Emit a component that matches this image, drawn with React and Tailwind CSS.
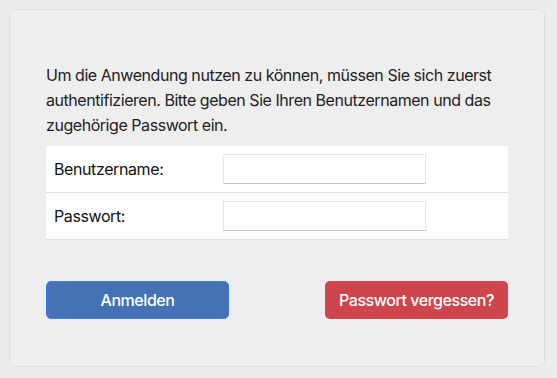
export default function App() {
  const font = { fontFamily: 'Inter, "Noto Sans", sans-serif' };
  return (
    <div className="w-[557px] h-[378px] bg-[#ececec] p-[9px]" style={font}>
      <div className="w-[536px] h-[358px] bg-[#eeeeee] border border-[#dedede] rounded-[6px] pt-[53px] px-[36px]">
        <p className="text-[16px] leading-[25px] text-[#222] tracking-[-0.45px]">
          Um die Anwendung nutzen zu können, müssen Sie sich zuerst authentifizieren. Bitte geben Sie Ihren Benutzernamen und das zugehörige Passwort ein.
        </p>
        <div className="mt-[8px] bg-white border-b border-[#e0e0e0]">
          <div className="flex items-center h-[47px] border-b border-[#e0e0e0]">
            <div className="w-[177px] pl-[8px] text-[16px] text-[#111] tracking-[-0.4px]">Benutzername:</div>
            <input className="w-[203px] h-[30px] bg-white border border-[#e6e6e6] border-b-[#c6c6c6] outline-none" />
          </div>
          <div className="flex items-center h-[46px]">
            <div className="w-[177px] pl-[8px] text-[16px] text-[#111] tracking-[-0.4px]">Passwort:</div>
            <input type="password" className="w-[203px] h-[30px] bg-white border border-[#e6e6e6] border-b-[#c6c6c6] outline-none" />
          </div>
        </div>
        <div className="flex justify-between mt-[41px]">
          <button className="w-[183px] h-[38px] rounded-[5px] bg-[#4472b4] border border-[#3c78ee] text-white text-[16px] font-medium tracking-[-0.45px]">
            Anmelden
          </button>
          <button className="w-[183px] h-[38px] rounded-[5px] bg-[#cc464c] text-white text-[16px] font-medium tracking-[-0.45px]">
            Passwort vergessen?
          </button>
        </div>
      </div>
    </div>
  );
}
